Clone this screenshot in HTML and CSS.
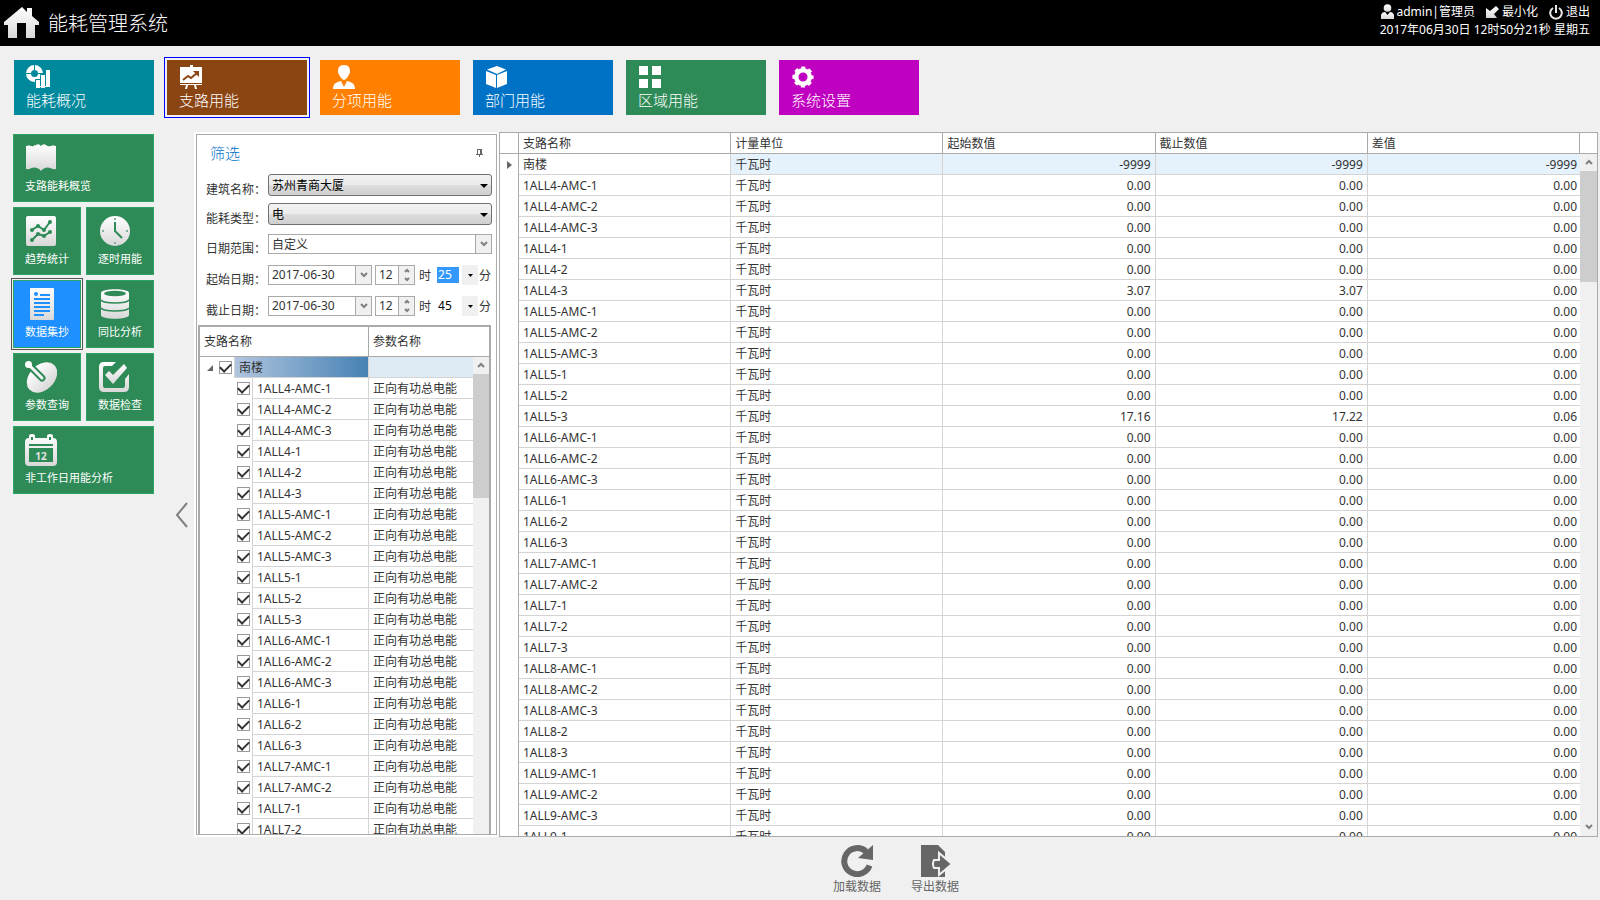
FILE: index.html
```html
<!DOCTYPE html>
<html lang="zh-CN">
<head>
  <meta charset="UTF-8">
  <title>能耗管理系统</title>
  <meta name="viewport" content="width=device-width, initial-scale=1.0">
  <link rel="stylesheet" href="styles.css">
</head>
<body>

  <svg class="defs" aria-hidden="true">
    <defs>
      <linearGradient id="silver" x1="0" y1="0" x2="0" y2="1">
        <stop offset="0" stop-color="#fff"/>
        <stop offset="1" stop-color="#d8d8d8"/>
      </linearGradient>
    </defs>
  </svg>

  <header class="header">
    <svg class="logo" width="36" height="32" viewBox="0 0 36 32"><path fill="url(#silver)" d="M18 0 23 5V1H28V9L35 15V18H31V31H22V16H13V31H4V18H0V15Z"/></svg>
    <h1>能耗管理系统</h1>
    <div class="user">
      <div class="user-links">
        <span class="user-item">
          <svg width="13" height="16" viewBox="0 0 13 16"><circle cx="6.500" cy="4" r="3.800" fill="url(#silver)"/><path fill="url(#silver)" d="M0 15V11Q1 8 4 8L6.500 11 9 8Q12 8 13 11V15Z"/></svg>
          admin|管理员
        </span>
        <button class="user-item">
          <svg width="13" height="13" viewBox="0 0 13 13"><path fill="url(#silver)" d="M10 0 13 3 8 8 11 12H0V2L4 5Z"/></svg>
          最小化
        </button>
        <button class="user-item">
          <svg width="14" height="15" viewBox="0 0 14 15" fill="none" stroke="#e8e8e8" stroke-width="2"><path d="M4 3A5.800 5.800 0 1 0 10 3M7 0V8"/></svg>
          退出
        </button>
      </div>
      <div>2017年06月30日 12时50分21秒 星期五</div>
    </div>
  </header>

  <nav class="nav">
    <button class="tab teal">
      <svg width="24" height="24" viewBox="0 0 24 24"><circle cx="8.500" cy="8.500" r="6" fill="none" stroke="#fff" stroke-width="5"/><path stroke="#00889c" d="M8.500 0V5M0 8.500H5M12 8.500H17"/><path fill="#fff" stroke="#00889c" d="M9.500 14.500H14.500V23.500H9.500ZM14.500 9.500H19.500V23.500H14.500Z"/><path fill="#fff" d="M20 5H24V22H20ZM10 21H24V22H10Z"/></svg>
      能耗概况
    </button>
    <button class="tab brown active">
      <svg width="24" height="24" viewBox="0 0 24 24"><path fill="#fff" d="M11 0H14V2H23V18H1V2H11ZM1 19H23V20H1ZM7 20H9L8 24H6ZM15 20H17L18 24H16Z"/><path fill="none" stroke="#8b4513" stroke-width="2" d="M4 15 9 11 12 13 18 8"/><path fill="#8b4513" d="M14 6H20V12Z"/></svg>
      支路用能
    </button>
    <button class="tab orange">
      <svg width="24" height="24" viewBox="0 0 24 24"><path fill="#fff" d="M12 0C17 0 18 3 18 7 17 10 15 14 12 15 9 14 7 10 6 7C6 3 7 0 12 0ZM9 16 12 22 15 16C20 17 23 19 23 24H1C1 19 4 17 9 16Z"/></svg>
      分项用能
    </button>
    <button class="tab blue">
      <svg width="24" height="24" viewBox="0 0 24 24"><path fill="#fff" d="M12 1 21 4.500 12 9 2 4.500ZM1 6 11 10V23L1 19ZM22 6 12 10V23L22 19Z"/></svg>
      部门用能
    </button>
    <button class="tab green">
      <svg width="24" height="24" viewBox="0 0 24 24"><path fill="#fff" d="M1 1H10V10H1ZM14 1H23V10H14ZM1 14H10V23H1ZM14 14H23V23H14Z"/></svg>
      区域用能
    </button>
    <button class="tab purple">
      <svg width="24" height="24" viewBox="0 0 24 24"><circle cx="12" cy="12" r="6.800" fill="none" stroke="#fff" stroke-width="4.500"/><circle cx="12" cy="12" r="9.300" fill="none" stroke="#fff" stroke-width="2.600" stroke-dasharray="4 3.304" stroke-dashoffset="2"/></svg>
      系统设置
    </button>
  </nav>

  <main class="main">
    <nav class="side">
      <button class="tile wide">
        <svg width="32" height="32" viewBox="0 0 32 32"><path fill="url(#silver)" d="M1 4C5 2 8 6 11 3Q14 1 16 4 18 1 21 3C24 6 27 2 31 4V27C27 28 24 24 20 26Q17 27 16 29 15 27 12 26C8 24 5 28 1 27Z"/></svg>
        支路能耗概览
      </button>
      <button class="tile">
        <svg width="32" height="32" viewBox="0 0 32 32"><rect x="1" y="1" width="30" height="30" rx="2" fill="url(#silver)"/><g fill="none" stroke="#2e8b57" stroke-width="2"><path d="M7 15 13 11 19 15 25 7M7 25 13 19 19 21 25 17"/></g><g fill="#2e8b57"><circle cx="7" cy="15" r="2"/><circle cx="13" cy="11" r="2"/><circle cx="19" cy="15" r="2"/><circle cx="25" cy="7" r="2"/><circle cx="7" cy="25" r="2"/><circle cx="13" cy="19" r="2"/><circle cx="19" cy="21" r="2"/><circle cx="25" cy="17" r="2"/></g></svg>
        趋势统计
      </button>
      <button class="tile">
        <svg width="32" height="32" viewBox="0 0 32 32"><circle cx="17" cy="16" r="15" fill="url(#silver)"/><path fill="none" stroke="#2e8b57" stroke-width="2" d="M17 7V16L24 23"/><path fill="#7fb596" d="M16 3H18V5H16ZM16 27H18V29H16ZM4 15H6V17H4ZM28 15H30V17H28Z"/></svg>
        逐时用能
      </button>
      <button class="tile active">
        <svg width="32" height="32" viewBox="0 0 32 32"><rect x="5" width="24" height="32" rx="1" fill="url(#silver)"/><circle cx="11" cy="6" r="2" fill="#1e90ff"/><path stroke="#1e90ff" stroke-width="2" d="M15 7H25M9 11H25M9 15H25M9 19H25M9 23H25M9 27H19"/></svg>
        数据集抄
      </button>
      <button class="tile">
        <svg width="32" height="32" viewBox="0 0 32 32"><path fill="url(#silver)" d="M3 5C3 0 31 0 31 5V27C31 32 3 32 3 27Z"/><ellipse cx="17" cy="5.500" rx="11" ry="2.800" fill="#2e8b57"/><path fill="none" stroke="#2e8b57" stroke-width="1.500" d="M3 12C6 16 28 16 31 12M3 20C6 24 28 24 31 20"/></svg>
        同比分析
      </button>
      <button class="tile">
        <svg width="32" height="32" viewBox="0 0 32 32"><ellipse cx="17" cy="16.500" rx="17.500" ry="12.500" transform="rotate(-45 17 16.500)" fill="url(#silver)"/><path stroke="#2e8b57" stroke-width="7" stroke-linecap="round" d="M3 3 17 17"/><path stroke="#f4f4f4" stroke-width="3" stroke-linecap="round" d="M3 3 17 17"/><circle cx="3.500" cy="3.500" r="3.500" fill="#fff"/></svg>
        参数查询
      </button>
      <button class="tile">
        <svg width="32" height="32" viewBox="0 0 32 32"><path fill="url(#silver)" d="M6 1H18L14 5H7Q5 5 5 7V25Q5 27 7 27H25Q27 27 27 25V18L31 13V26Q31 31 26 31H6Q1 31 1 26V6Q1 1 6 1Z"/><path fill="url(#silver)" d="M7 14 11 10 15 14 26 3 29 7 15 23Z"/></svg>
        数据检查
      </button>
      <button class="tile wide">
        <svg width="32" height="32" viewBox="0 0 32 32"><path fill="url(#silver)" fill-rule="evenodd" d="M4 4V2Q4 0 7 0T10 2V4H22V2Q22 0 25 0T28 2V4Q32 4 32 8V28Q32 32 28 32H4Q0 32 0 28V8Q0 4 4 4ZM6 3V6H8V3ZM24 3V6H26V3ZM4 10V12H28V10ZM4 14V28H28V14Z"/><text class="day" x="16" y="26">12</text></svg>
        非工作日用能分析
      </button>
    </nav>

    <button class="collapse" aria-label="收起">
      <svg width="14" height="26" viewBox="0 0 14 26" fill="none" stroke="#808080" stroke-width="2"><path d="M12 1 2 13 12 25"/></svg>
    </button>

    <div class="content">
      <div class="panels">
        <section class="filter">
          <div class="filter-box">
            <div class="filter-head">
              <h2>筛选</h2>
              <svg width="7" height="8" viewBox="0 0 7 8"><path fill="#666" fill-rule="evenodd" d="M1 0H6V5H7V6H4V8H3V6H0V5H1ZM2 1V5H4V1Z"/></svg>
            </div>

            <div class="field">
              <label for="building">建筑名称：</label>
              <span class="select push">
                <select id="building"><option>苏州青商大厦</option></select>
                <svg width="8" height="4" viewBox="0 0 8 4"><path d="M0 0H8L4 4Z"/></svg>
              </span>
            </div>
            <div class="field">
              <label for="energy">能耗类型：</label>
              <span class="select push">
                <select id="energy"><option>电</option></select>
                <svg width="8" height="4" viewBox="0 0 8 4"><path d="M0 0H8L4 4Z"/></svg>
              </span>
            </div>
            <div class="field tall">
              <label for="range">日期范围：</label>
              <span class="select flat">
                <select id="range"><option>自定义</option></select>
                <span class="drop"><svg width="8" height="6" viewBox="0 0 8 6"><path d="M1 1 4 4 7 1"/></svg></span>
              </span>
            </div>
            <div class="field tall">
              <label for="start">起始日期：</label>
              <span class="box date"><input type="text" id="start" value="2017-06-30"><button class="drop" aria-label="选择起始日期"><svg width="8" height="6" viewBox="0 0 8 6"><path d="M1 1 4 4 7 1"/></svg></button></span>
              <span class="box hour"><input type="text" id="startHour" value="12" aria-label="起始小时"><button class="drop" aria-label="调整起始小时"><svg width="6" height="14" viewBox="0 0 6 14"><path d="M1 4 3 2 5 4M1 10 3 12 5 10"/></svg></button></span>
              <label class="unit" for="startHour">时</label>
              <span class="minute">
                <select class="selected" id="startMinute" aria-label="起始分钟"><option>25</option></select>
                <span class="arrow"><svg width="5" height="3" viewBox="0 0 5 3"><path d="M0 0H5L2.500 3Z"/></svg></span>
              </span>
              <label class="unit" for="startMinute">分</label>
            </div>
            <div class="field tall">
              <label for="end">截止日期：</label>
              <span class="box date"><input type="text" id="end" value="2017-06-30"><button class="drop" aria-label="选择截止日期"><svg width="8" height="6" viewBox="0 0 8 6"><path d="M1 1 4 4 7 1"/></svg></button></span>
              <span class="box hour"><input type="text" id="endHour" value="12" aria-label="截止小时"><button class="drop" aria-label="调整截止小时"><svg width="6" height="14" viewBox="0 0 6 14"><path d="M1 4 3 2 5 4M1 10 3 12 5 10"/></svg></button></span>
              <label class="unit" for="endHour">时</label>
              <span class="minute">
                <select id="endMinute" aria-label="截止分钟"><option>45</option></select>
                <span class="arrow"><svg width="5" height="3" viewBox="0 0 5 3"><path d="M0 0H5L2.500 3Z"/></svg></span>
              </span>
              <label class="unit" for="endMinute">分</label>
            </div>

            <div class="tree">
              <div class="tree-head"><span>支路名称</span><span>参数名称</span></div>
              <div class="tree-body">
                <table class="tree-table">
                  <colgroup><col class="col-name"><col></colgroup>
                  <tbody id="treeRows"></tbody>
                </table>
                <div class="track">
                  <svg width="8" height="6" viewBox="0 0 8 6"><path d="M1 5 4 2 7 5"/></svg>
                  <div class="thumb tree-thumb"></div>
                </div>
              </div>
            </div>
          </div>
        </section>

        <section class="grid">
          <div class="grid-scroll">
            <table class="grid-table">
              <colgroup><col class="col-mark"><col><col><col><col><col></colgroup>
              <thead>
                <tr><th></th><th>支路名称</th><th>计量单位</th><th>起始数值</th><th>截止数值</th><th>差值</th></tr>
              </thead>
              <tbody id="gridRows"></tbody>
            </table>
          </div>
          <div class="grid-bar">
            <div class="grid-corner"></div>
            <div class="track">
              <svg width="8" height="6" viewBox="0 0 8 6"><path d="M1 5 4 2 7 5"/></svg>
              <div class="thumb grid-thumb"></div>
              <svg class="down" width="8" height="6" viewBox="0 0 8 6"><path d="M1 1 4 4 7 1"/></svg>
            </div>
          </div>
        </section>
      </div>

      <footer class="actions">
        <button class="action">
          <svg width="32" height="32" viewBox="0 0 32 32"><path fill="none" stroke="#666" stroke-width="6" d="M28.500 20.500A13 13 0 1 1 25 6.500"/><path fill="#666" d="M32 0V15L17 13Z"/></svg>
          加载数据
        </button>
        <button class="action">
          <svg width="32" height="32" viewBox="0 0 32 32"><path fill="#666" d="M2 0H19L26 7V32H2Z"/><path fill="#666" stroke="#f0f0f0" stroke-width="2" d="M15 15H20V8L33 19 20 30V23H15Q13 19 15 15Z"/></svg>
          导出数据
        </button>
      </footer>
    </div>
  </main>

  <script>
    const branches = [
      "1ALL4-AMC-1", "1ALL4-AMC-2", "1ALL4-AMC-3", "1ALL4-1", "1ALL4-2", "1ALL4-3",
      "1ALL5-AMC-1", "1ALL5-AMC-2", "1ALL5-AMC-3", "1ALL5-1", "1ALL5-2", "1ALL5-3",
      "1ALL6-AMC-1", "1ALL6-AMC-2", "1ALL6-AMC-3", "1ALL6-1", "1ALL6-2", "1ALL6-3",
      "1ALL7-AMC-1", "1ALL7-AMC-2", "1ALL7-1", "1ALL7-2", "1ALL7-3",
      "1ALL8-AMC-1", "1ALL8-AMC-2", "1ALL8-AMC-3", "1ALL8-2", "1ALL8-3",
      "1ALL9-AMC-1", "1ALL9-AMC-2", "1ALL9-AMC-3", "1ALL9-1"
    ];

    const readings = {
      "1ALL4-3": ["3.07", "3.07", "0.00"],
      "1ALL5-3": ["17.16", "17.22", "0.06"]
    };

    function gridRow(name, values, current) {
      const mark = current ? '<svg width="5" height="8" viewBox="0 0 5 8"><path fill="#666" d="M0 0 5 4 0 8Z"/></svg>' : "";
      return `<tr class="${current ? "current" : ""}"><td class="mark">${mark}</td><td>${name}</td><td>千瓦时</td>` +
        values.map(v => `<td class="num">${v}</td>`).join("") + "</tr>";
    }

    function treeRow(name, param, root) {
      const arrow = root ? '<svg width="6" height="6" viewBox="0 0 6 6"><path fill="#666" d="M6 0V6H0Z"/></svg>' : "";
      return `<tr class="${root ? "root" : ""}"><td><label class="node"><span class="pick">${arrow}<input type="checkbox" checked></span>` +
        `<span class="name">${name}</span></label></td><td>${param}</td></tr>`;
    }

    document.getElementById("gridRows").innerHTML =
      gridRow("南楼", ["-9999", "-9999", "-9999"], true) +
      branches.map(b => gridRow(b, readings[b] || ["0.00", "0.00", "0.00"], false)).join("");

    document.getElementById("treeRows").innerHTML =
      treeRow("南楼", "", true) +
      branches.slice(0, 22).map(b => treeRow(b, "正向有功总电能", false)).join("");
  </script>

</body>
</html>
```
FILE: styles.css
```css
* {
  box-sizing: border-box;
}

body {
  display: flex;
  flex-direction: column;
  height: 100vh;
  margin: 0;
  overflow: hidden;
  background: #f0f0f0;
  color: #333;
  font: 12px/16px "Noto Sans", "Noto Sans CJK SC", sans-serif;
}

button, input, select {
  margin: 0;
  padding: 0;
  border: none;
  border-radius: 0;
  background: none;
  color: inherit;
  font: inherit;
}

svg {
  display: block;
  flex: none;
}

.defs {
  position: absolute;
  width: 0;
  height: 0;
}

/* header */
.header {
  display: flex;
  flex: none;
  align-items: center;
  height: 46px;
  padding: 0 10px 0 4px;
  background: #000;
  color: #fff;
}

.header h1 {
  margin: 0 auto 0 8px;
  padding-top: 2px;
  font-size: 20px;
  font-weight: 300;
  line-height: 24px;
}

.user {
  align-self: flex-start;
  padding-top: 3px;
  text-align: right;
  line-height: 18px;
}

.user-links {
  display: flex;
  justify-content: flex-end;
  gap: 11px;
}

.user-item {
  display: flex;
  align-items: center;
  gap: 3px;
}

/* top tabs */
.nav {
  display: flex;
  flex: none;
  gap: 13px;
  padding: 14px 14px 17px;
}

.tab {
  display: flex;
  flex-direction: column;
  align-items: flex-start;
  gap: 1px;
  width: 140px;
  height: 55px;
  padding: 5px 12px 0;
  color: #fff;
  font-size: 15px;
  font-weight: 300;
  line-height: 20px;
}

.tab.active {
  outline: 1px solid #00f;
  outline-offset: 2px;
}

.teal { background: #00889c; }
.brown { background: #8b4513; }
.orange { background: #ff8000; }
.blue { background: #0072c6; }
.green { background: #2e8b57; }
.purple { background: #c000c0; }

.main {
  display: flex;
  flex: 1;
  min-height: 0;
}

/* side tiles */
.side {
  display: grid;
  flex: none;
  grid-template-columns: 68px 68px;
  grid-auto-rows: 68px;
  gap: 5px;
  padding: 2px 0 0 13px;
}

.tile {
  display: flex;
  flex-direction: column;
  align-items: flex-start;
  gap: 4px;
  padding: 7px 11px 0;
  border: 1px solid #2da562;
  background: #2e8b57;
  color: #fff;
  font-size: 11px;
  line-height: 16px;
  white-space: nowrap;
}

.tile.wide {
  grid-column: span 2;
}

.tile.active {
  background: #1e90ff;
  outline: 1px solid #555;
  outline-offset: 1px;
}

.day {
  fill: #e0e0e0;
  font: bold 10px "Noto Sans", sans-serif;
  text-anchor: middle;
}

.collapse {
  display: flex;
  flex: none;
  align-items: center;
  justify-content: center;
  width: 40px;
  padding: 0 0 3px 15px;
}

.content {
  display: flex;
  flex: 1;
  flex-direction: column;
  min-width: 0;
}

.panels {
  display: flex;
  flex: 1;
  min-height: 0;
  padding-right: 2px;
}

/* filter panel */
.filter {
  flex: none;
  width: 305px;
  padding: 2px;
  background: #fff;
}

.filter-box {
  display: flex;
  flex-direction: column;
  height: 100%;
  padding: 0 4px 0 1px;
  border: 1px solid #aaa;
}

.filter-head {
  display: flex;
  align-items: center;
  justify-content: space-between;
  height: 39px;
  padding: 0 9px 4px 12px;
}

.filter-head h2 {
  margin: 0;
  color: #0072c6;
  font-size: 15px;
  font-weight: 300;
  line-height: 20px;
}

.field {
  display: flex;
  flex: none;
  align-items: center;
  height: 29px;
  padding: 0 0 7px 8px;
}

.field.tall {
  height: 31px;
}

.field > label:first-child {
  width: 62px;
  padding-top: 9px;
  white-space: nowrap;
}

.field .unit {
  padding-top: 2px;
}

.select {
  position: relative;
  flex: 1;
}

.select select, .minute select {
  display: block;
  width: 100%;
  appearance: none;
}

.push select {
  height: 22px;
  padding: 2px 0 0 3px;
  border: 1px solid #707070;
  border-radius: 3px;
  background: linear-gradient(#f2f2f2, #ebebeb 50%, #ddd 50%, #cfcfcf);
  color: #000;
}

.push svg {
  position: absolute;
  top: 10px;
  right: 4px;
  pointer-events: none;
}

.flat select {
  height: 20px;
  padding: 2px 0 0 3px;
  border: 1px solid #aaa;
}

.flat .drop {
  position: absolute;
  top: 1px;
  right: 1px;
  bottom: 1px;
  pointer-events: none;
}

.drop {
  display: flex;
  flex: none;
  align-items: center;
  justify-content: center;
  width: 16px;
  border-left: 1px solid #aaa;
  background: #f0f0f0;
}

.drop svg, .track svg {
  fill: none;
  stroke: #808080;
  stroke-width: 2;
}

.box {
  display: flex;
  height: 20px;
  border: 1px solid #aaa;
}

.box input {
  flex: 1;
  min-width: 0;
  padding-left: 3px;
}

.date {
  width: 104px;
  margin-right: 3px;
}

.hour {
  width: 40px;
  margin-right: 4px;
}

.minute {
  display: flex;
  align-items: center;
  width: 41px;
  margin: 0 1px 0 6px;
  color: #000;
}

.minute select {
  width: 22px;
  height: 16px;
  padding-left: 1px;
  margin-right: 3px;
}

.minute .selected {
  background: #3399ff;
  color: #fff;
}

.arrow {
  display: flex;
  align-items: center;
  justify-content: center;
  width: 16px;
  height: 20px;
  background: #f0f0f0;
}

/* branch tree */
.tree {
  display: flex;
  flex: 1;
  flex-direction: column;
  min-height: 0;
  margin-right: 1px;
  border: 2px solid #aaa;
  border-bottom: none;
}

.tree-head {
  display: flex;
  flex: none;
  height: 30px;
  border-bottom: 1px solid #aaa;
  line-height: 30px;
}

.tree-head span {
  padding-left: 4px;
}

.tree-head span:first-child {
  width: 169px;
  border-right: 1px solid #aaa;
}

.tree-body {
  display: flex;
  flex: 1;
  min-height: 0;
  overflow: hidden;
}

table {
  width: 100%;
  border-collapse: separate;
  border-spacing: 0;
  table-layout: fixed;
}

.tree-table {
  flex: 1;
  align-self: flex-start;
}

.col-name {
  width: 169px;
}

td {
  height: 21px;
  padding: 2px 4px 0;
  border-right: 1px solid #d4d4d4;
  border-bottom: 1px solid #d4d4d4;
  white-space: nowrap;
}

.tree-table td:first-child {
  padding: 0;
  border-bottom: none;
}

.tree-table td:last-child {
  border-right: none;
}

.node {
  display: flex;
  height: 21px;
}

.pick {
  display: flex;
  align-items: center;
  justify-content: flex-end;
  width: 52px;
  gap: 6px;
  padding-right: 2px;
}

.name {
  flex: 1;
  padding: 1px 0 0 4px;
  border-left: 1px solid #d4d4d4;
  border-bottom: 1px solid #d4d4d4;
  line-height: 20px;
}

.root .pick {
  width: 34px;
}

.root .name {
  background: linear-gradient(to right, #b0c4de, #4682b4);
}

.root td:last-child {
  background: #deeaf4;
}

input[type="checkbox"] {
  display: flex;
  align-items: center;
  justify-content: center;
  width: 13px;
  height: 13px;
  border: 1px solid #999;
  background: #fff;
  appearance: none;
}

input[type="checkbox"]:checked::before {
  content: "";
  width: 9px;
  height: 5px;
  margin-bottom: 3px;
  border: solid #333;
  border-width: 0 0 2px 2px;
  transform: rotate(-45deg);
}

/* scroll bars */
.track {
  display: flex;
  flex: 1;
  flex-direction: column;
  align-items: center;
  background: #f0f0f0;
}

.tree-body .track {
  flex: 0 0 16px;
}

.track svg {
  margin: 5px 0 6px;
}

.thumb {
  width: 100%;
  background: #cdcdcd;
}

.tree-thumb {
  height: 124px;
}

.grid-thumb {
  height: 111px;
}

.track .down {
  margin-top: auto;
}

/* data grid */
.grid {
  display: flex;
  flex: 1;
  min-width: 0;
  border: 1px solid #aaa;
  background: #fff;
}

.grid-scroll {
  flex: 1;
  min-width: 0;
  overflow: hidden;
}

.col-mark {
  width: 19px;
}

th {
  height: 21px;
  padding: 2px 4px 0;
  border-right: 1px solid #aaa;
  border-bottom: 1px solid #aaa;
  font-weight: normal;
  text-align: left;
}

.grid-table td:last-child {
  padding-right: 3px;
  border-right: none;
}

.grid-table .mark {
  padding: 0 0 0 7px;
  border-right-color: #aaa;
  border-bottom: none;
}

.current td:nth-child(n+3) {
  background: #e5f1fb;
}

.num {
  text-align: right;
}

.grid-bar {
  display: flex;
  flex: none;
  flex-direction: column;
  width: 17px;
}

.grid-corner {
  height: 21px;
  border-bottom: 1px solid #aaa;
}

/* bottom actions */
.actions {
  display: flex;
  flex: none;
  justify-content: center;
  gap: 30px;
  height: 63px;
  padding: 8px 2px 0 0;
}

.action {
  display: flex;
  flex-direction: column;
  align-items: center;
  gap: 2px;
  color: #666;
}
```
